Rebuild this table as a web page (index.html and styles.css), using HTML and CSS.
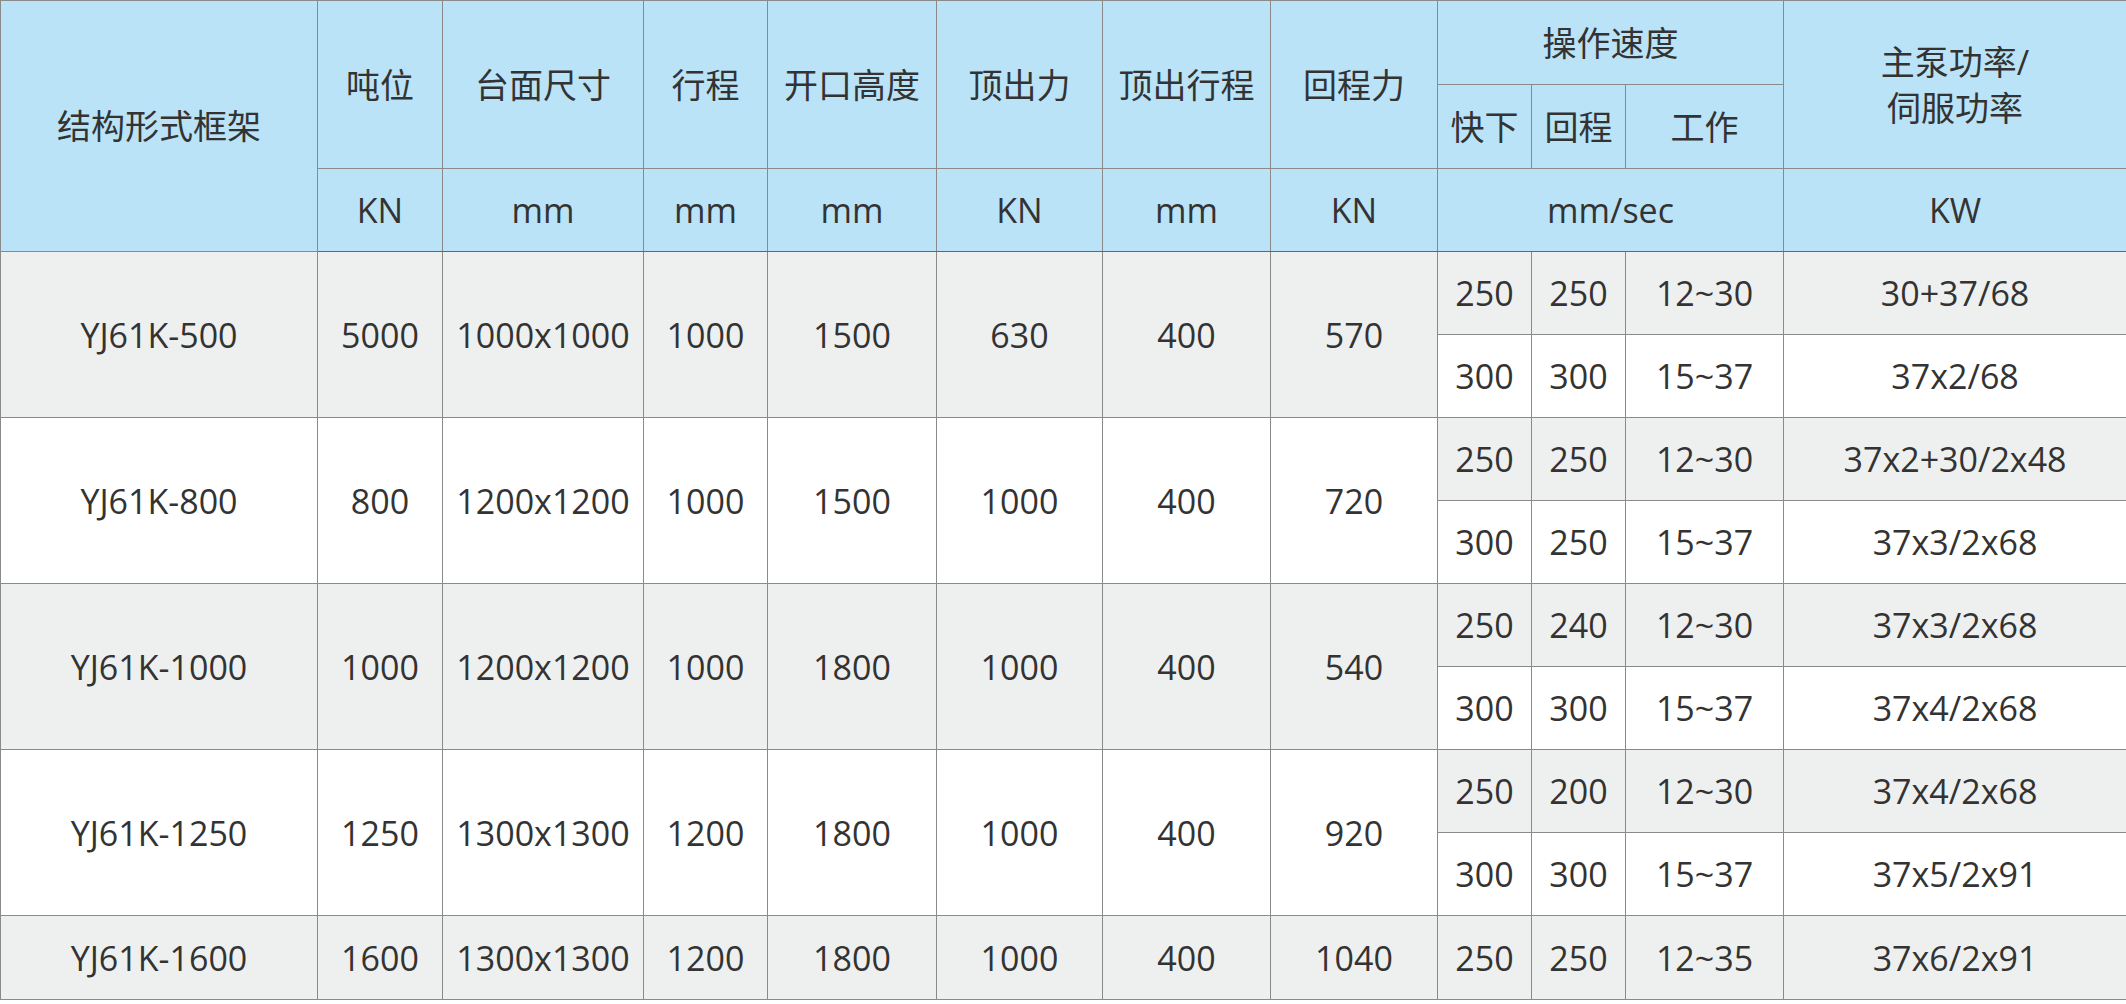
FILE: index.html
```html
<!DOCTYPE html>
<html lang="zh-CN">
<head>
<meta charset="utf-8">
<title>YJ61K 参数表</title>
<link rel="stylesheet" href="styles.css">
</head>
<body>
<table class="spec">
  <colgroup>
    <col class="c1"><col class="c2"><col class="c3"><col class="c4"><col class="c5"><col class="c6"><col class="c7"><col class="c8"><col class="c9"><col class="c10"><col class="c11"><col class="c12">
  </colgroup>
  <thead>
    <tr class="h1">
      <th rowspan="3">结构形式框架</th>
      <th rowspan="2">吨位</th>
      <th rowspan="2">台面尺寸</th>
      <th rowspan="2">行程</th>
      <th rowspan="2">开口高度</th>
      <th rowspan="2">顶出力</th>
      <th rowspan="2">顶出行程</th>
      <th rowspan="2">回程力</th>
      <th colspan="3">操作速度</th>
      <th rowspan="2" class="two">主泵功率/<br>伺服功率</th>
    </tr>
    <tr class="h2">
      <th>快下</th>
      <th>回程</th>
      <th>工作</th>
    </tr>
    <tr class="h3">
      <th>KN</th>
      <th>mm</th>
      <th>mm</th>
      <th>mm</th>
      <th>KN</th>
      <th>mm</th>
      <th>KN</th>
      <th colspan="3">mm/sec</th>
      <th>KW</th>
    </tr>
  </thead>
  <tbody>
    <tr class="sub">
      <td rowspan="2" class="g">YJ61K-500</td>
      <td rowspan="2" class="g">5000</td>
      <td rowspan="2" class="g">1000x1000</td>
      <td rowspan="2" class="g">1000</td>
      <td rowspan="2" class="g">1500</td>
      <td rowspan="2" class="g">630</td>
      <td rowspan="2" class="g">400</td>
      <td rowspan="2" class="g">570</td>
      <td class="g">250</td><td class="g">250</td><td class="g">12~30</td><td class="g">30+37/68</td>
    </tr>
    <tr class="sub">
      <td class="w">300</td><td class="w">300</td><td class="w">15~37</td><td class="w">37x2/68</td>
    </tr>
    <tr class="sub">
      <td rowspan="2" class="w">YJ61K-800</td>
      <td rowspan="2" class="w">800</td>
      <td rowspan="2" class="w">1200x1200</td>
      <td rowspan="2" class="w">1000</td>
      <td rowspan="2" class="w">1500</td>
      <td rowspan="2" class="w">1000</td>
      <td rowspan="2" class="w">400</td>
      <td rowspan="2" class="w">720</td>
      <td class="g">250</td><td class="g">250</td><td class="g">12~30</td><td class="g">37x2+30/2x48</td>
    </tr>
    <tr class="sub">
      <td class="w">300</td><td class="w">250</td><td class="w">15~37</td><td class="w">37x3/2x68</td>
    </tr>
    <tr class="sub">
      <td rowspan="2" class="g">YJ61K-1000</td>
      <td rowspan="2" class="g">1000</td>
      <td rowspan="2" class="g">1200x1200</td>
      <td rowspan="2" class="g">1000</td>
      <td rowspan="2" class="g">1800</td>
      <td rowspan="2" class="g">1000</td>
      <td rowspan="2" class="g">400</td>
      <td rowspan="2" class="g">540</td>
      <td class="g">250</td><td class="g">240</td><td class="g">12~30</td><td class="g">37x3/2x68</td>
    </tr>
    <tr class="sub">
      <td class="w">300</td><td class="w">300</td><td class="w">15~37</td><td class="w">37x4/2x68</td>
    </tr>
    <tr class="sub">
      <td rowspan="2" class="w">YJ61K-1250</td>
      <td rowspan="2" class="w">1250</td>
      <td rowspan="2" class="w">1300x1300</td>
      <td rowspan="2" class="w">1200</td>
      <td rowspan="2" class="w">1800</td>
      <td rowspan="2" class="w">1000</td>
      <td rowspan="2" class="w">400</td>
      <td rowspan="2" class="w">920</td>
      <td class="g">250</td><td class="g">200</td><td class="g">12~30</td><td class="g">37x4/2x68</td>
    </tr>
    <tr class="sub">
      <td class="w">300</td><td class="w">300</td><td class="w">15~37</td><td class="w">37x5/2x91</td>
    </tr>
    <tr class="last">
      <td class="g">YJ61K-1600</td>
      <td class="g">1600</td>
      <td class="g">1300x1300</td>
      <td class="g">1200</td>
      <td class="g">1800</td>
      <td class="g">1000</td>
      <td class="g">400</td>
      <td class="g">1040</td>
      <td class="g">250</td><td class="g">250</td><td class="g">12~35</td><td class="g">37x6/2x91</td>
    </tr>
  </tbody>
</table>
</body>
</html>
```
FILE: styles.css
```css
html, body {
  margin: 0;
  padding: 0;
  background: #ffffff;
}

.spec {
  width: 2126px;
  table-layout: fixed;
  border-collapse: collapse;
  font-family: "Open Sans", "Noto Sans CJK SC", sans-serif;
  font-size: 34px;
  color: #333333;
  border-top: 1px solid #a9a9a9;
}

.c1 { width: 317px; }
.c2 { width: 125px; }
.c3 { width: 201px; }
.c4 { width: 124px; }
.c5 { width: 169px; }
.c6 { width: 166px; }
.c7 { width: 168px; }
.c8 { width: 167px; }
.c9 { width: 94px; }
.c10 { width: 94px; }
.c11 { width: 158px; }
.c12 { width: 343px; }

.spec th,
.spec td {
  border: 1px solid #8a8a8a;
  padding: 0;
  text-align: center;
  vertical-align: middle;
  font-weight: normal;
  white-space: nowrap;
  line-height: 46px;
}

.spec th {
  background: #bae3f8;
}

.spec thead tr.h3 th {
  border-bottom-color: #666666;
}

.h1 { height: 84px; }
.h2 { height: 84px; }
.h3 { height: 83px; }

.sub { height: 83px; }
.last { height: 84px; }

.g { background: #eef0ef; }
.w { background: #ffffff; }

.two { line-height: 47px; }
```
